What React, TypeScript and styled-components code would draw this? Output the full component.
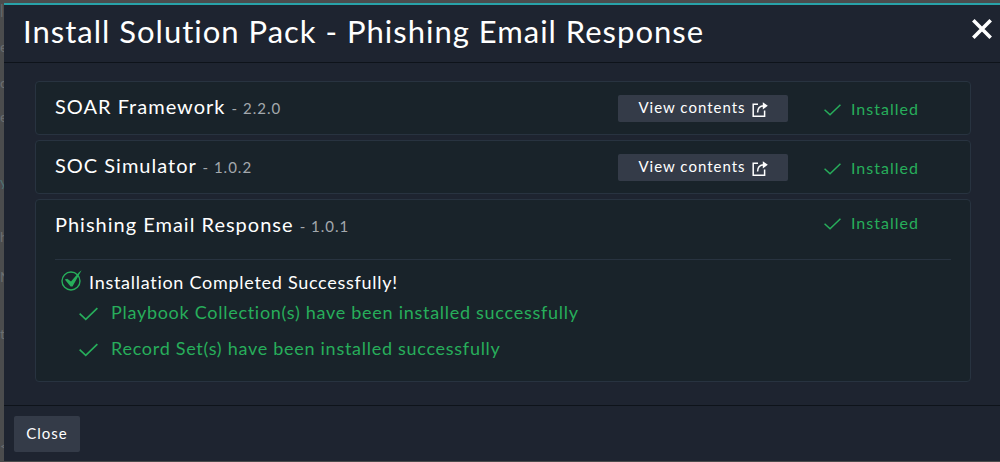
import React from "react";
import styled, { createGlobalStyle } from "styled-components";

const GlobalStyle = createGlobalStyle`
  * { box-sizing: border-box; }
  body {
    margin: 0;
    background: #4b4c4d;
    color: #ffffff;
    font-family: Lato, "Liberation Sans", sans-serif;
    font-size: 16px;
    letter-spacing: 1px;
  }
  button { font: inherit; letter-spacing: inherit; color: inherit; border: 0; cursor: pointer; }
`;

const Page = styled.div`
  position: relative;
  min-height: 100vh;
  padding: 3px 0 1px 4px;
  overflow: hidden;
`;

const Behind = styled.div`
  position: absolute;
  inset: 0 auto 0 0;
  color: #6c6e70;
  font-size: 14px;
  line-height: 20px;
`;

const BehindText = styled.span<{ $top: number; $tone?: string }>`
  position: absolute;
  left: 0;
  top: ${(p) => p.$top}px;
  color: ${(p) => p.$tone ?? "inherit"};
`;

const Modal = styled.section`
  position: relative;
  background: #1e2430;
  border-top: 2px solid #28a2a9;
`;

const Header = styled.header`
  display: flex;
  justify-content: space-between;
  align-items: flex-start;
  height: 58px;
  padding: 6px 8px 0 19px;
  border-bottom: 1px solid #0e131a;
`;

const Title = styled.h1`
  margin: 0;
  font-size: 31px;
  font-weight: 400;
  line-height: 40px;
`;

const CloseIcon = styled.button`
  display: flex;
  padding: 8px 0;
  background: none;
`;

const Body = styled.div`
  display: flex;
  flex-direction: column;
  gap: 5px;
  padding: 18px 29px 23px 31px;
`;

const Card = styled.article`
  padding: 0 19px;
  background: #19232a;
  border: 1px solid #283340;
  border-radius: 4px;
`;

const Row = styled.div<{ $tall?: boolean }>`
  display: flex;
  align-items: flex-start;
  height: ${(p) => (p.$tall ? 60 : 52)}px;
  padding-top: 12px;
  border-bottom: ${(p) => (p.$tall ? "1px solid #283340" : "0")};
`;

const PackName = styled.h2`
  flex: 1;
  margin: 0;
  font-size: 20px;
  font-weight: 400;
  line-height: 24px;
`;

const Version = styled.small`
  color: #a3a8ad;
  font-size: 15px;
`;

const ViewButton = styled.button`
  display: flex;
  align-items: center;
  justify-content: center;
  gap: 6px;
  width: 170px;
  height: 27px;
  margin-top: 1px;
  padding: 0;
  background: #343b48;
  border-radius: 2px;
  font-size: 15px;
  line-height: 24px;

  span { padding-bottom: 3px; }
  svg { margin-top: 2px; }
`;

const Status = styled.div<{ $raised?: boolean }>`
  display: flex;
  align-items: center;
  gap: 10px;
  width: 163px;
  padding-left: 36px;
  margin-top: ${(p) => (p.$raised ? -1 : 3)}px;
  color: #27ae5b;
  line-height: 24px;
`;

const Result = styled.div`
  padding: 10px 0 15px 6px;
  font-size: 18px;
  letter-spacing: 0.04em;
`;

const ResultTitle = styled.p`
  display: flex;
  gap: 7px;
  margin: 0;
  line-height: 24px;
`;

const Steps = styled.ul`
  list-style: none;
  margin: 0;
  padding: 0 0 0 18px;
`;

const Step = styled.li`
  display: flex;
  align-items: center;
  gap: 13px;
  height: 36px;
  color: #27ae5b;

  svg { margin-top: 2px; }
`;

const Footer = styled.footer`
  padding: 10px 10px 9px;
  border-top: 1px solid #0e131a;
`;

const CloseButton = styled.button`
  width: 66px;
  height: 36px;
  padding: 0 0 2px;
  background: #343b48;
  border-radius: 2px;
  font-size: 15px;
`;

const Tick = ({ size = 17 }: { size?: number }) => (
  <svg width={size} height={size} viewBox="0 0 18 18" fill="none" stroke="currentColor" strokeWidth="1.6" aria-hidden="true">
    <path d="M0.6 9.2 6.4 14.6 17.4 4" />
  </svg>
);

const CircleTick = () => (
  <svg width="21" height="21" viewBox="0 0 21 21" aria-hidden="true">
    <circle cx="10" cy="11" r="9" fill="none" stroke="#27ae5b" strokeWidth="1.4" />
    <path d="M20.6 0.3 11.5 16.6 9.6 16.6 3.8 9.5 6.2 8.8 10 11.6 18 2.2z" fill="#27ae5b" />
  </svg>
);

const Share = () => (
  <svg width="16" height="15" viewBox="0 0 16 15" fill="none" stroke="#fff" strokeWidth="1.5" aria-hidden="true">
    <path d="M6 2.2H1.2V14.2H12.6V8.5" />
    <path d="M5.6 10.5C5.6 6.2 7.4 3.9 12 3.8" />
    <path d="M10.8 0.3 15.8 3.8 10.8 7.4z" fill="#fff" stroke="none" />
  </svg>
);

const packs = [
  { name: "SOAR Framework", version: "2.2.0" },
  { name: "SOC Simulator", version: "1.0.2" },
];

const steps = [
  "Playbook Collection(s) have been installed successfully",
  "Record Set(s) have been installed successfully",
];

const fragments: { text: string; top: number; tone?: string }[] = [
  { text: "|", top: 0 },
  { text: "e", top: 37 },
  { text: "c", top: 73 },
  { text: "e", top: 107 },
  { text: "y", top: 172, tone: "#4f7273" },
  { text: "h", top: 227 },
  { text: "N", top: 267 },
  { text: "t", top: 324 },
  { text: "<", top: 436 },
];

export default function App() {
  return (
    <Page>
      <GlobalStyle />
      <Behind aria-hidden="true">
        {fragments.map((f) => (
          <BehindText key={f.top} $top={f.top} $tone={f.tone}>{f.text}</BehindText>
        ))}
      </Behind>
      <Modal role="dialog" aria-labelledby="title">
        <Header>
          <Title id="title">Install Solution Pack - Phishing Email Response</Title>
          <CloseIcon aria-label="Close dialog">
            <svg width="20" height="20" viewBox="0 0 20 20" stroke="#fff" strokeWidth="3.6" aria-hidden="true">
              <path d="M1.3 1.3 18.7 18.7M18.7 1.3 1.3 18.7" />
            </svg>
          </CloseIcon>
        </Header>
        <Body>
          {packs.map((pack) => (
            <Card key={pack.name}>
              <Row>
                <PackName>{pack.name} <Version>- {pack.version}</Version></PackName>
                <ViewButton><span>View contents</span><Share /></ViewButton>
                <Status><Tick />Installed</Status>
              </Row>
            </Card>
          ))}
          <Card>
            <Row $tall>
              <PackName>Phishing Email Response <Version>- 1.0.1</Version></PackName>
              <Status $raised><Tick />Installed</Status>
            </Row>
            <Result>
              <ResultTitle><CircleTick />Installation Completed Successfully!</ResultTitle>
              <Steps>
                {steps.map((step) => (
                  <Step key={step}><Tick size={19} />{step}</Step>
                ))}
              </Steps>
            </Result>
          </Card>
        </Body>
        <Footer>
          <CloseButton>Close</CloseButton>
        </Footer>
      </Modal>
    </Page>
  );
}
